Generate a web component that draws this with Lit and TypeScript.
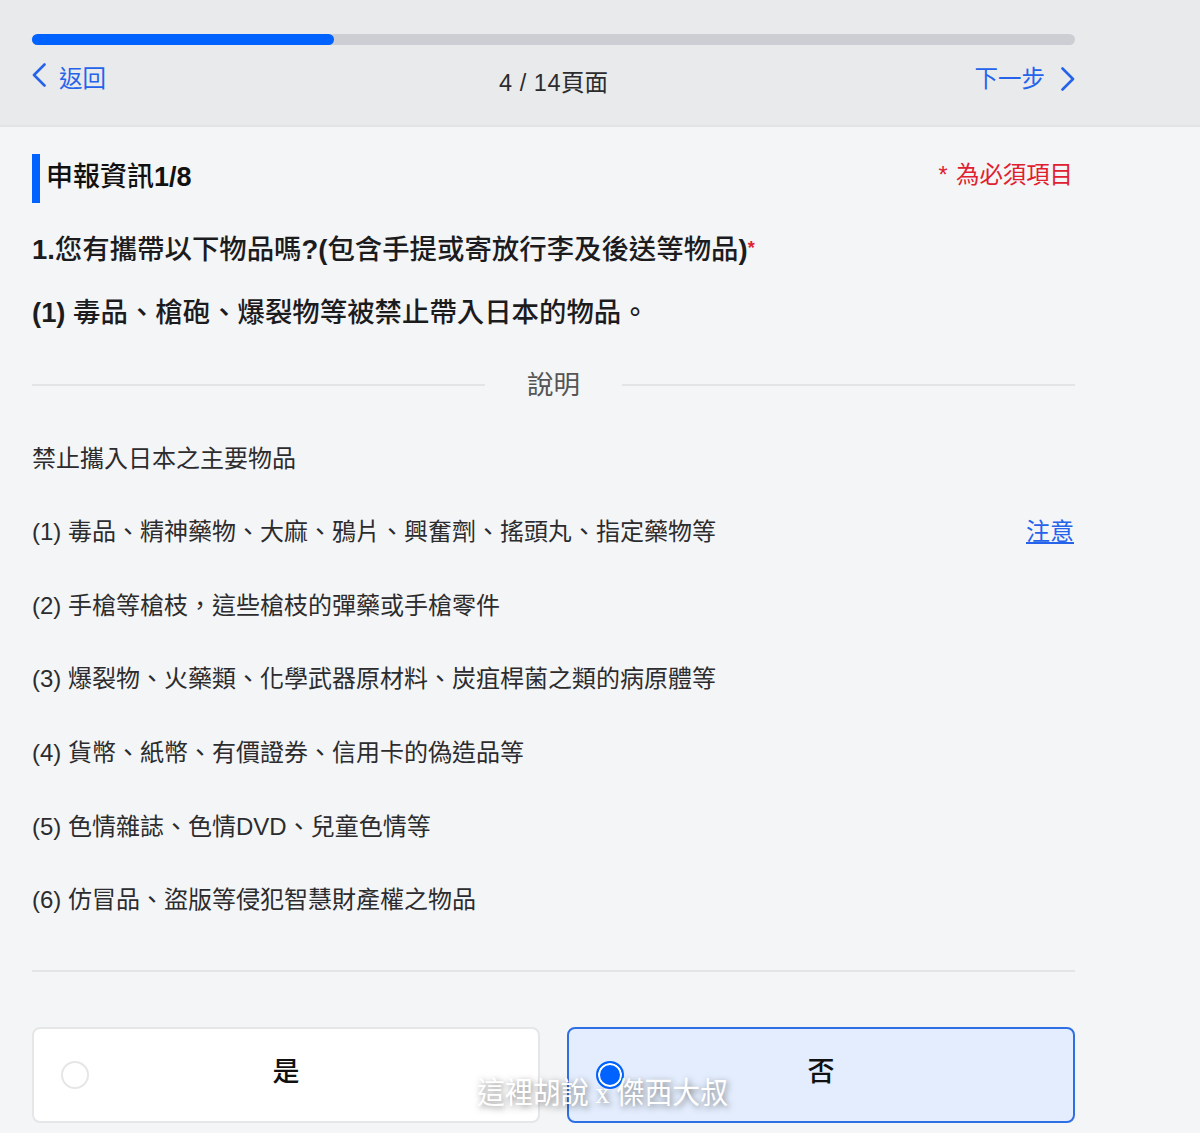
import { LitElement, html, css } from "lit";
import { customElement } from "lit/decorators.js";

const ITEMS = [
  "(1) 毒品、精神藥物、大麻、鴉片、興奮劑、搖頭丸、指定藥物等",
  "(2) 手槍等槍枝\uFF0C這些槍枝的彈藥或手槍零件",
  "(3) 爆裂物、火藥類、化學武器原材料、炭疽桿菌之類的病原體等",
  "(4) 貨幣、紙幣、有價證券、信用卡的偽造品等",
  "(5) 色情雜誌、色情DVD、兒童色情等",
  "(6) 仿冒品、盜版等侵犯智慧財產權之物品",
];

@customElement("app-root")
export class AppRoot extends LitElement {
  static styles = css`
    :host {
      display: block;
      position: relative;
      width: 1200px;
      height: 1133px;
      overflow: hidden;
      background: #f4f5f7;
      color: #1c1c1e;
      font-family: "Liberation Sans", "Noto Sans CJK TC", sans-serif;
    }
    .top {
      box-sizing: content-box;
      height: 91px;
      padding: 34px 125px 0 32px;
      background: #e9eaeb;
      border-bottom: 2px solid #e2e3e5;
    }
    .track {
      height: 11px;
      border-radius: 6px;
      background: #cdced3;
    }
    .fill {
      height: 100%;
      border-radius: 6px;
      background: #0062ff;
    }
    .nav {
      display: grid;
      grid-template-columns: 1fr auto 1fr;
      align-items: start;
      margin-top: 19px;
    }
    .link {
      display: flex;
      align-items: flex-start;
      color: #2563eb;
      font-size: 23.5px;
      line-height: 30px;
    }
    .link svg { display: block; }
    .back { gap: 13px; }
    .back svg { margin-top: -1px; }
    .next { gap: 16px; justify-content: flex-end; }
    .next svg { margin-top: 3px; }
    .count {
      margin-top: 4px;
      font-size: 23.5px;
      line-height: 30px;
      color: #2c2c2e;
    }
    .num { letter-spacing: 0.55px; }
    main {
      padding: 27px 125px 0 32px;
    }
    .section {
      display: flex;
      justify-content: space-between;
      height: 49px;
    }
    .title {
      border-left: 8px solid #0062ff;
      padding-left: 6px;
      font-size: 27px;
      font-weight: 500;
      line-height: 47px;
      color: #111;
    }
    .l { font-weight: 700; }
    .req {
      margin: 5px 2px 0 0;
      font-size: 23.4px;
      line-height: 32px;
      word-spacing: 2px;
      color: #e0202e;
    }
    .q {
      font-size: 27.42px;
      font-weight: 500;
      line-height: 40px;
      color: #1c1c1e;
    }
    .q1 { margin-top: 25px; }
    .q2 { margin-top: 23px; }
    .star { color: #e0202e; font-size: 18px; vertical-align: 5px; font-weight: 700; }
    .divider {
      display: flex;
      align-items: center;
      margin-top: 32px;
      height: 40px;
    }
    .divider i {
      flex: 1;
      height: 2px;
      background: #e3e4e6;
    }
    .divider span {
      width: 137px;
      text-align: center;
      font-size: 26.5px;
      line-height: 40px;
      color: #555;
    }
    .intro, .item {
      font-size: 24px;
      line-height: 34px;
      color: #2c2c2e;
    }
    .intro { margin-top: 37px; }
    .list { display: flex; flex-direction: column; gap: 39.7px; margin-top: 39px; }
    .item { display: flex; justify-content: space-between; }
    .note { color: #2563eb; text-decoration: underline; margin-right: 1px; }
    hr {
      border: 0;
      height: 2px;
      background: #e3e4e6;
      margin: 53px 0 0;
    }
    .choices {
      display: grid;
      grid-template-columns: 1fr 1fr;
      gap: 27px;
      margin-top: 55px;
    }
    .choice {
      position: relative;
      height: 96px;
      box-sizing: border-box;
      border: 2px solid #e5e6e8;
      border-radius: 8px;
      background: #fff;
      display: flex;
      align-items: center;
      justify-content: center;
      font-size: 27px;
      font-weight: 500;
      color: #111;
      padding-bottom: 11px;
    }
    .choice.on {
      border-color: #2f6fe4;
      background: #e3edfd;
    }
    .radio {
      position: absolute;
      left: 27px;
      top: 32px;
      width: 28px;
      height: 28px;
      box-sizing: border-box;
      border-radius: 50%;
      border: 2px solid #e5e6e8;
      background: #fff;
    }
    .on .radio {
      border-color: #0062ff;
      background: #0062ff;
      box-shadow: inset 0 0 0 2px #fff;
    }
    .mark {
      position: absolute;
      left: 477px;
      top: 1071px;
      font-family: "Liberation Serif", "Noto Sans CJK TC", serif;
      font-size: 30px;
      line-height: 44px;
      white-space: nowrap;
      color: #fff;
      transform: scaleX(0.93);
      transform-origin: left center;
      text-shadow: 2px 2px 7px rgba(50, 50, 50, 0.6);
    }
  `;

  render() {
    return html`
      <div class="top">
        <div class="track"><div class="fill" style="width:29%"></div></div>
        <div class="nav">
          <div class="link back">
            <svg width="14" height="24" viewBox="0 0 14 24" fill="none" stroke="currentColor" stroke-width="2.6" stroke-linecap="round" stroke-linejoin="round"><path d="M12.5 1.5 2 12l10.500 10.500"/></svg>
            <span>返回</span>
          </div>
          <div class="count"><span class="num">4 / 14</span>頁面</div>
          <div class="link next">
            <span>下一步</span>
            <svg width="14" height="24" viewBox="0 0 14 24" fill="none" stroke="currentColor" stroke-width="2.6" stroke-linecap="round" stroke-linejoin="round"><path d="M1.500 1.500 12 12 1.500 22.500"/></svg>
          </div>
        </div>
      </div>
      <main>
        <div class="section">
          <div class="title">申報資訊<span class="l">1/8</span></div>
          <div class="req">* 為必須項目</div>
        </div>
        <div class="q q1"><span class="l">1.</span>您有攜帶以下物品嗎<span class="l">?(</span>包含手提或寄放行李及後送等物品<span class="l">)</span><span class="star">*</span></div>
        <div class="q q2"><span class="l">(1)</span> 毒品、槍砲、爆裂物等被禁止帶入日本的物品。</div>
        <div class="divider"><i></i><span>說明</span><i></i></div>
        <div class="intro">禁止攜入日本之主要物品</div>
        <div class="list">
          ${ITEMS.map(
            (t, i) => html`<div class="item"><span>${t}</span>${i === 0 ? html`<span class="note">注意</span>` : ""}</div>`
          )}
        </div>
        <hr />
        <div class="choices">
          <div class="choice"><span class="radio"></span>是</div>
          <div class="choice on"><span class="radio"></span>否</div>
        </div>
      </main>
      <div class="mark">這裡胡說 x 傑西大叔</div>
    `;
  }
}
